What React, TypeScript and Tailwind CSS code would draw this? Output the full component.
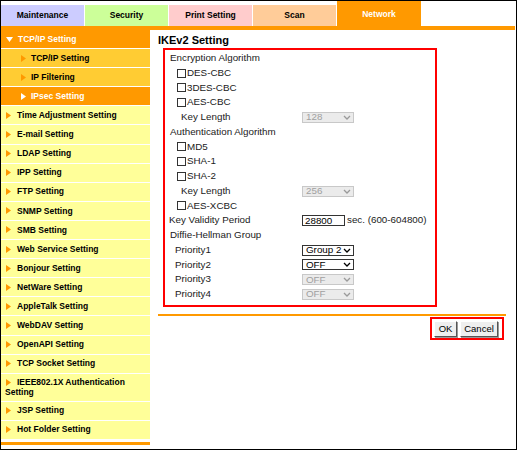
import React from 'react'

const tabs = [
  { label: 'Maintenance', bg: 'bg-[#ccccff]' },
  { label: 'Security', bg: 'bg-[#ccff99]' },
  { label: 'Print Setting', bg: 'bg-[#ffcccc]' },
  { label: 'Scan', bg: 'bg-[#ffcc99]' },
]

const menuItems = [
  'Time Adjustment Setting',
  'E-mail Setting',
  'LDAP Setting',
  'IPP Setting',
  'FTP Setting',
  'SNMP Setting',
  'SMB Setting',
  'Web Service Setting',
  'Bonjour Setting',
  'NetWare Setting',
  'AppleTalk Setting',
  'WebDAV Setting',
  'OpenAPI Setting',
  'TCP Socket Setting',
]

const Arrow = ({ color = '#ff9900' }: { color?: string }) => (
  <svg width="5" height="7" viewBox="0 0 5 7" className="shrink-0">
    <polygon points="0,0 5,3.5 0,7" fill={color} />
  </svg>
)

const Down = () => (
  <svg width="7" height="5" viewBox="0 0 7 5" className="shrink-0">
    <polygon points="0,0 7,0 3.5,5" fill="#ffffff" />
  </svg>
)

const Chevron = ({ color }: { color: string }) => (
  <svg width="8" height="5" viewBox="0 0 8 5" className="shrink-0">
    <polyline points="1,1 4,4 7,1" fill="none" stroke={color} strokeWidth="1.3" />
  </svg>
)

const Check = () => <span className="inline-block w-[9px] h-[9px] border border-[#333] bg-white mr-[1px]" />

const Select = ({ value, disabled }: { value: string; disabled?: boolean }) => (
  <span
    className={
      disabled
        ? 'w-[52px] h-[11px] flex items-center justify-between pl-[3px] pr-[2px] border border-[#c8c8c8] bg-[#ebebeb] text-[#a0a0a0] whitespace-nowrap'
        : 'w-[52px] h-[11px] flex items-center justify-between pl-[3px] pr-[2px] border border-[#333] bg-white text-black whitespace-nowrap'
    }
  >
    <span className="leading-none">{value}</span>
    <Chevron color={disabled ? '#9a9a9a' : '#000000'} />
  </span>
)

const Row = ({ children }: { children: React.ReactNode }) => (
  <div className="h-[14.75px] flex items-center whitespace-nowrap">{children}</div>
)

const Field = ({ label, indent, children }: { label: string; indent: string; children: React.ReactNode }) => (
  <Row>
    <span className={`w-[133px] shrink-0 ${indent}`}>{label}</span>
    {children}
  </Row>
)

export default function App() {
  return (
    <div className="w-[517px] h-[450px] border border-black bg-white overflow-hidden flex flex-col font-['Liberation_Sans',Arial,sans-serif]">
      <div className="h-[25px] flex items-end gap-[1px] shrink-0">
        {tabs.map((t) => (
          <div key={t.label} className={`w-[83px] h-[21px] ${t.bg} flex items-center justify-center text-[8.5px] font-bold text-black`}>
            {t.label}
          </div>
        ))}
        <div className="w-[84px] h-[25px] bg-[#ff9900] flex items-center justify-center text-[8.5px] font-bold text-white pt-[1px]">
          Network
        </div>
      </div>
      <div className="h-[4px] bg-[#ff9900] mr-[1px] shrink-0" />

      <div className="flex flex-1">
        <div className="w-[149px] flex flex-col text-[8.5px] font-bold">
          <div className="h-[19.1px] bg-[#ff9900] text-white flex items-center gap-[5px] pl-[5px] border-b border-white">
            <Down />
            <span>TCP/IP Setting</span>
          </div>
          <div className="h-[19.1px] bg-[#ffcc33] flex items-center gap-[5px] pl-[20px] border-b border-white">
            <Arrow />
            <span>TCP/IP Setting</span>
          </div>
          <div className="h-[19.1px] bg-[#ffcc33] flex items-center gap-[5px] pl-[20px] border-b border-white">
            <Arrow />
            <span>IP Filtering</span>
          </div>
          <div className="h-[19.1px] bg-[#ff9900] text-white flex items-center gap-[5px] pl-[20px] border-b border-white">
            <Arrow color="#ffffff" />
            <span>IPsec Setting</span>
          </div>
          {menuItems.map((m) => (
            <div key={m} className="h-[19.1px] bg-[#ffff99] flex items-center gap-[6px] pl-[5px] border-b border-white">
              <Arrow />
              <span>{m}</span>
            </div>
          ))}
          <div className="h-[28px] bg-[#ffff99] flex flex-col justify-center pl-[4px] border-b border-white leading-[10px]">
            <div className="flex items-center gap-[6px] pl-[1px]">
              <Arrow />
              <span>IEEE802.1X Authentication</span>
            </div>
            <div>Setting</div>
          </div>
          {['JSP Setting', 'Hot Folder Setting'].map((m) => (
            <div key={m} className="h-[19.1px] bg-[#ffff99] flex items-center gap-[6px] pl-[5px] border-b border-white">
              <Arrow />
              <span>{m}</span>
            </div>
          ))}
          <div className="h-[3px] bg-[#ff9900] mt-[2px]" />
        </div>

        <div className="flex-1 flex flex-col pl-[8px] pt-[3px] text-[9.8px] text-[#1a1a1a]">
          <div className="text-[11px] font-bold leading-[14px] text-black">IKEv2 Setting</div>
          <div className="ml-[5px] mt-[1px] w-[274px] h-[259px] border-2 border-[#ff0000] pl-[4px] pt-[1px]">
            <Row>
              <span className="pl-[1px]">Encryption Algorithm</span>
            </Row>
            {['DES-CBC', '3DES-CBC', 'AES-CBC'].map((c) => (
              <Row key={c}>
                <span className="pl-[8px] flex items-center">
                  <Check />
                  {c}
                </span>
              </Row>
            ))}
            <Field label="Key Length" indent="pl-[12px]">
              <Select value="128" disabled />
            </Field>
            <Row>
              <span className="pl-[1px]">Authentication Algorithm</span>
            </Row>
            {['MD5', 'SHA-1', 'SHA-2'].map((c) => (
              <Row key={c}>
                <span className="pl-[8px] flex items-center">
                  <Check />
                  {c}
                </span>
              </Row>
            ))}
            <Field label="Key Length" indent="pl-[12px]">
              <Select value="256" disabled />
            </Field>
            <Row>
              <span className="pl-[8px] flex items-center">
                <Check />
                AES-XCBC
              </span>
            </Row>
            <Field label="Key Validity Period" indent="pl-[0px]">
              <span className="w-[43px] h-[11px] border border-[#333] bg-white flex items-center pl-[2px] text-black leading-none">28800</span>
              <span className="ml-[2px]">sec. (600-604800)</span>
            </Field>
            <Row>
              <span className="pl-[1px]">Diffie-Hellman Group</span>
            </Row>
            <Field label="Priority1" indent="pl-[6px]">
              <Select value="Group 2" />
            </Field>
            <Field label="Priority2" indent="pl-[6px]">
              <Select value="OFF" />
            </Field>
            <Field label="Priority3" indent="pl-[6px]">
              <Select value="OFF" disabled />
            </Field>
            <Field label="Priority4" indent="pl-[6px]">
              <Select value="OFF" disabled />
            </Field>
          </div>
          <div className="mt-[7px] h-[2px] w-[348px] bg-[#ff9900]" />
          <div className="w-[346px] flex justify-end mt-[1px]">
            <div className="h-[23px] w-[74px] border-2 border-[#ff0000] flex items-center gap-[3px] pl-[2px]">
              <button className="h-[16px] w-[23px] bg-[#efefef] border border-t-white border-l-white border-r-[#555] border-b-[#555] shadow-[1px_1px_0_#999] text-[9.5px] text-black leading-none">
                OK
              </button>
              <button className="h-[16px] w-[38px] bg-[#efefef] border border-t-white border-l-white border-r-[#555] border-b-[#555] shadow-[1px_1px_0_#999] text-[9.5px] text-black leading-none">
                Cancel
              </button>
            </div>
          </div>
        </div>
      </div>
    </div>
  )
}
